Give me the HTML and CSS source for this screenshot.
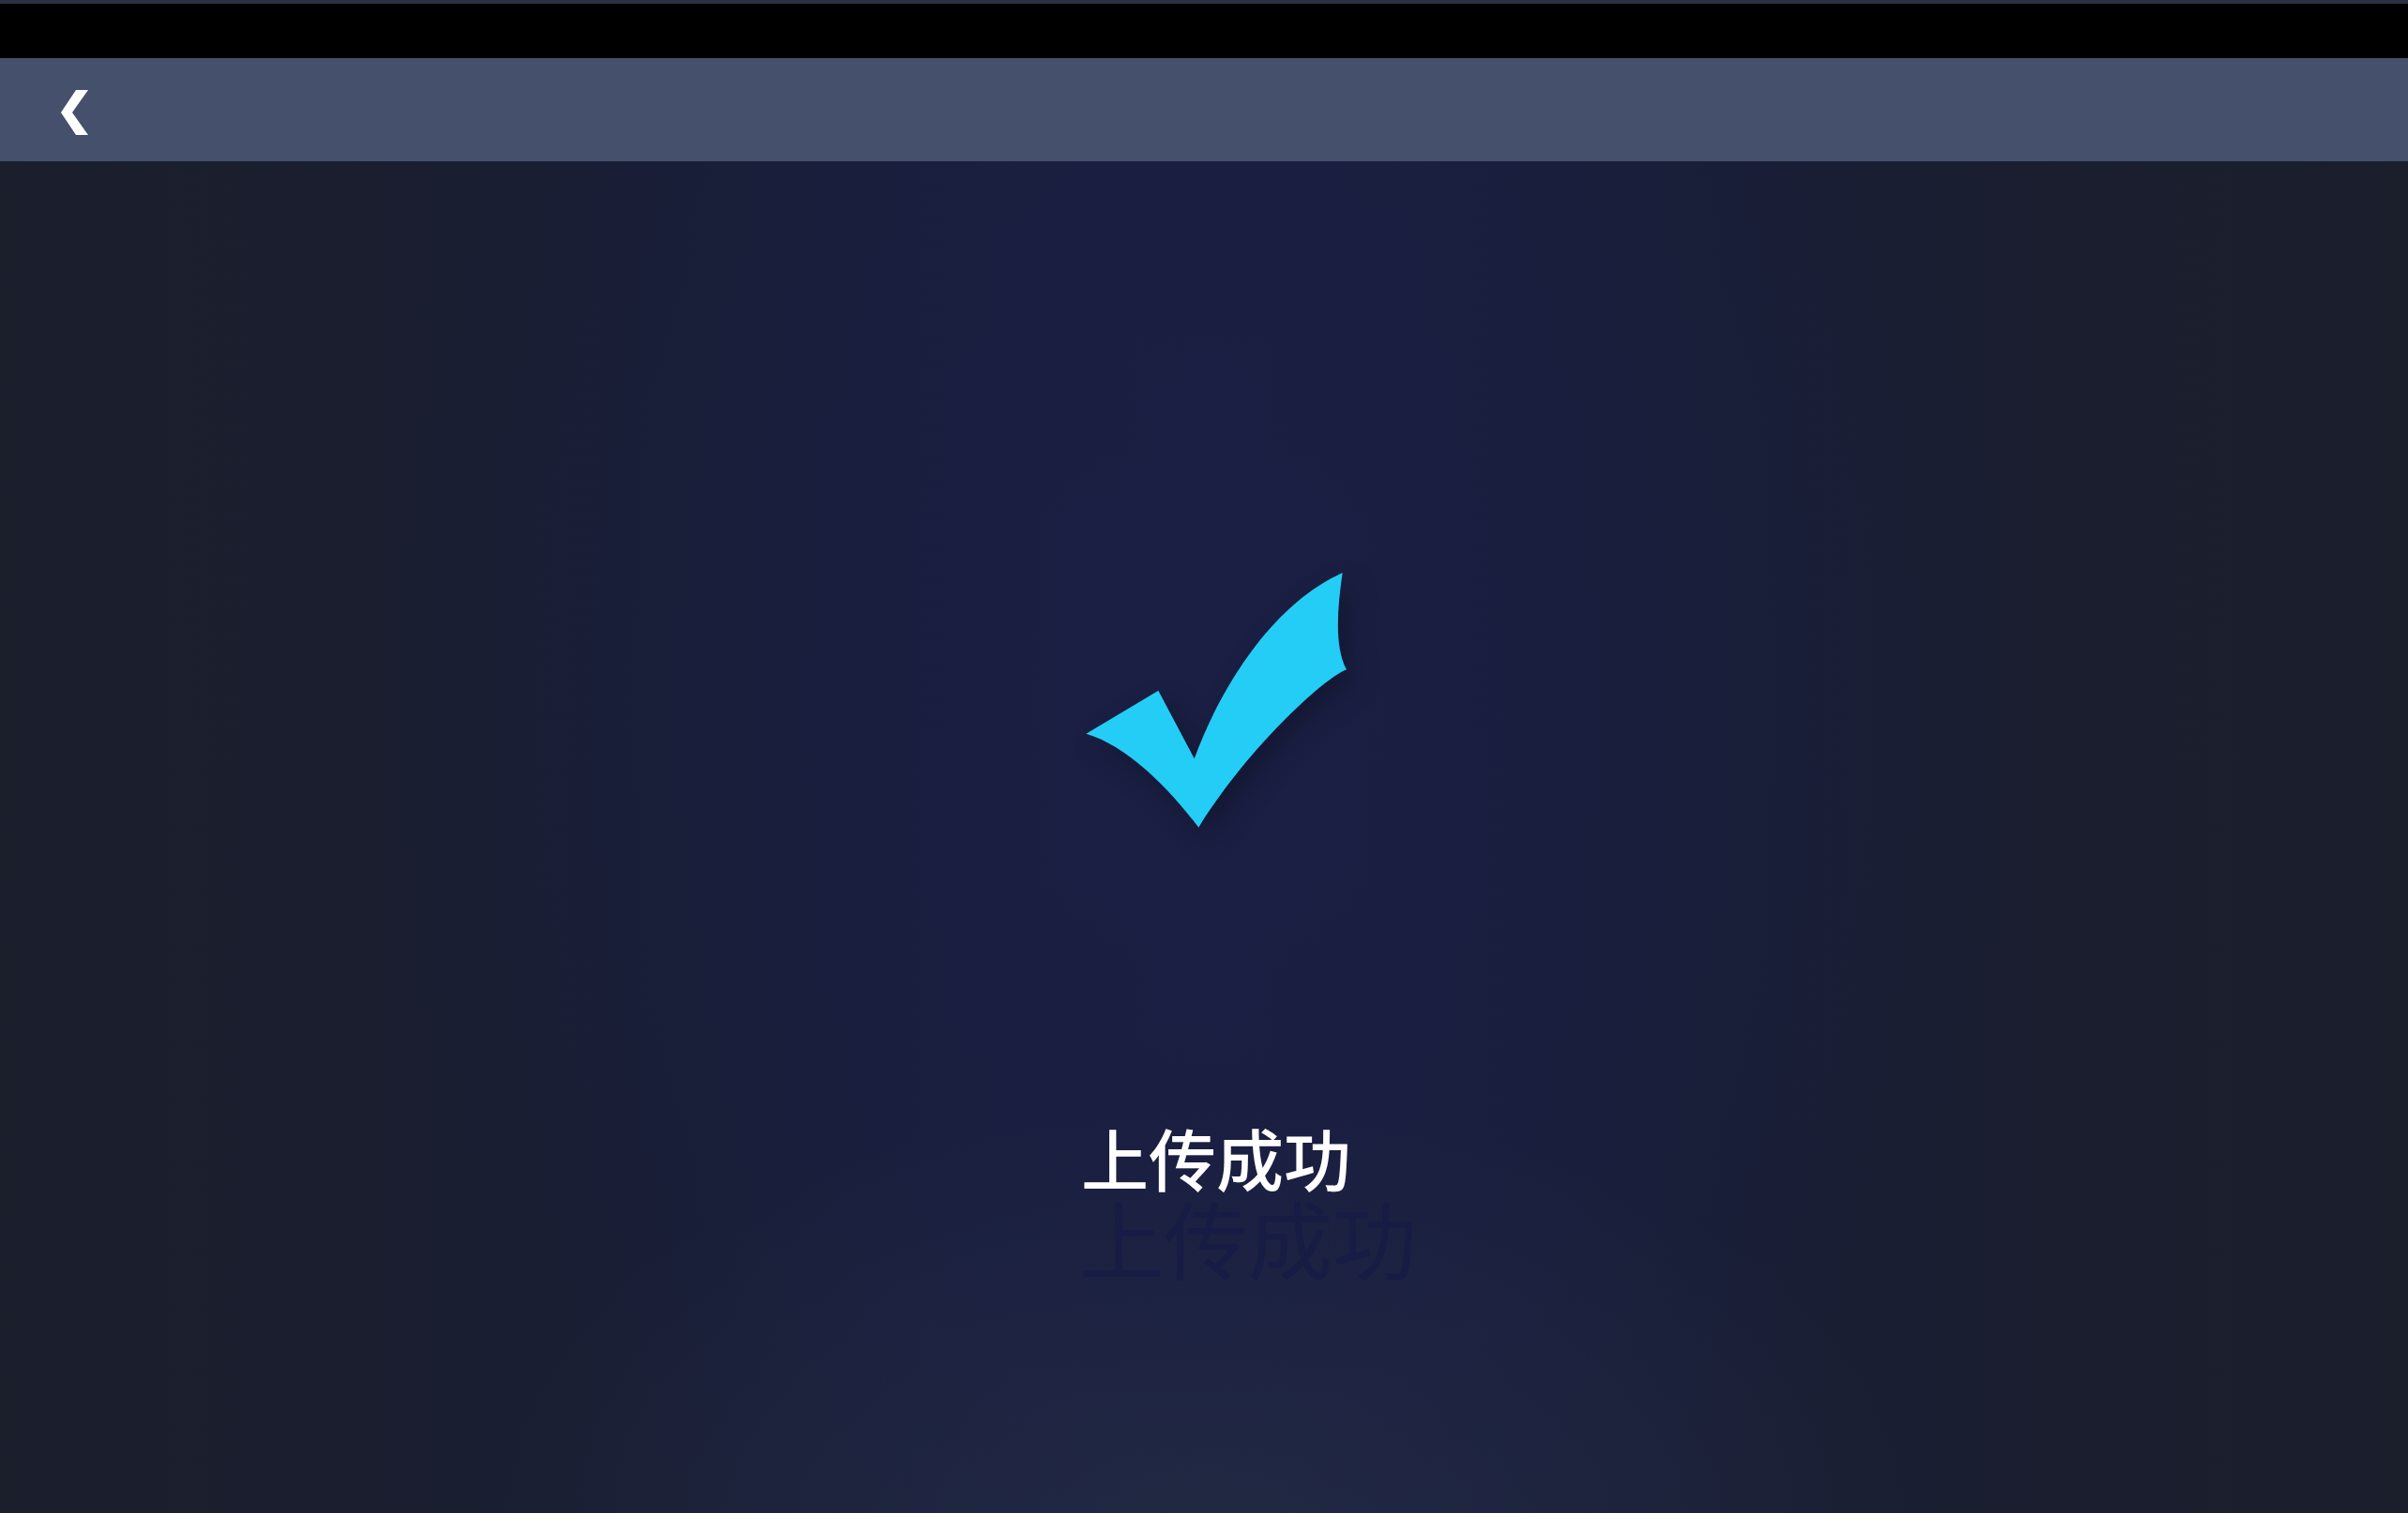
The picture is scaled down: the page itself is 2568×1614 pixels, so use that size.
FILE: index.html
```
<!DOCTYPE html>
<html lang="zh-CN">
<head>
<meta charset="utf-8">
<title>上传成功</title>
<link rel="stylesheet" href="styles.css">
</head>
<body>
<div class="app">
  <div class="statusbar"></div>
  <header class="topbar">
    <button class="back" aria-label="返回">
      <svg width="32" height="50" viewBox="0 0 32 50">
        <polygon points="16,0 29,0 12,24 29,48 16,48 0,24" fill="#ffffff"/>
      </svg>
    </button>
  </header>
  <main class="content">
    <svg class="check" width="292" height="285" viewBox="0 0 292 285">
      <path d="M7.3 177.7 L84.3 131.7 L122.7 204.3 C150 130 205 40 280.7 6 C275 45 272 85 285 109.3 C266 115 183 188 127.3 277.7 C95 235 50 190 7.3 177.7 Z" fill="#24cdf6"/>
    </svg>
    <div class="message">
      <div class="title">上传成功</div>
      <div class="title-shadow">上传成功</div>
    </div>
  </main>
</div>
</body>
</html>
```
FILE: styles.css
```
html, body {
  margin: 0;
  padding: 0;
  height: 100%;
  background: #1b1f2c;
}
.app {
  display: flex;
  flex-direction: column;
  height: 100vh;
  font-family: "Noto Sans CJK SC", "Noto Sans", sans-serif;
}
.statusbar {
  height: 58px;
  background: #000;
  border-top: 4px solid #2b3140;
  flex: none;
}
.topbar {
  height: 110px;
  background: #44506c;
  display: flex;
  align-items: center;
  padding-left: 65px;
  flex: none;
}
.back {
  background: none;
  border: 0;
  padding: 0;
  margin-top: 8px;
  display: flex;
  cursor: pointer;
}
.content {
  flex: 1;
  display: flex;
  flex-direction: column;
  align-items: center;
  padding-top: 433px;
  padding-left: 26px;
  background:
    radial-gradient(ellipse 34% 75% at 50% 40%, rgba(26,31,68,0.9) 0%, rgba(26,31,68,0.0) 100%),
    radial-gradient(ellipse 30% 30% at 50% 100%, rgba(36,44,66,0.9) 0%, rgba(36,44,66,0) 100%),
    linear-gradient(90deg, #1b1f2c 0%, #1a1e2f 15%, #191e36 30%, #1a1f3e 42%, #1a1f40 50%, #1a1f3e 58%, #191e36 70%, #1a1e2f 85%, #1b1f2c 100%);
}
.check {
  flex: none;
  filter: drop-shadow(10px 12px 14px rgba(10,14,30,0.45));
}
.message {
  margin-top: 308px;
  display: flex;
  flex-direction: column;
  align-items: flex-start;
  width: 288px;
}
.title {
  color: #ffffff;
  font-size: 72px;
  font-weight: 500;
  line-height: 72px;
  white-space: nowrap;
}
.title-shadow {
  color: #161c44;
  font-size: 90px;
  line-height: 90px;
  white-space: nowrap;
  margin-top: 4px;
  margin-left: -2px;
}
```
